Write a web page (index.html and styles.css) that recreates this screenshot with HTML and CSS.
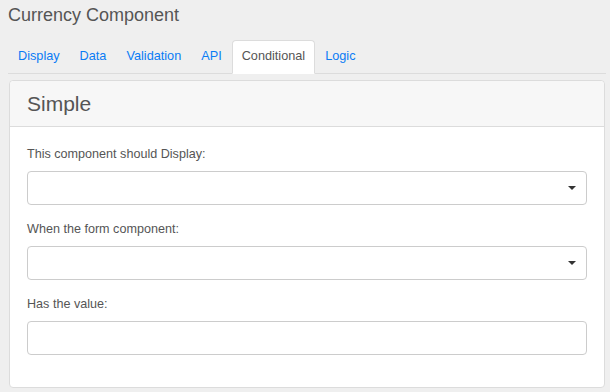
FILE: index.html
```html
<!DOCTYPE html>
<html lang="en">
<head>
<meta charset="UTF-8">
<meta name="viewport" content="width=device-width, initial-scale=1.0">
<title>Currency Component</title>
<link rel="stylesheet" href="styles.css">
</head>
<body>

<div class="page">
  <h1 class="title">Currency Component</h1>

  <!-- Tabs -->
  <ul class="tabs">
    <li><a class="tab" href="#">Display</a></li>
    <li><a class="tab" href="#">Data</a></li>
    <li><a class="tab" href="#">Validation</a></li>
    <li><a class="tab" href="#">API</a></li>
    <li><a class="tab active" href="#">Conditional</a></li>
    <li><a class="tab" href="#">Logic</a></li>
  </ul>

  <!-- Simple conditional -->
  <div class="card">
    <div class="card-head">Simple</div>
    <div class="card-body">
      <div class="group">
        <label>This component should Display:</label>
        <div class="select"><span class="caret"></span></div>
      </div>
      <div class="group">
        <label>When the form component:</label>
        <div class="select"><span class="caret"></span></div>
      </div>
      <div class="group">
        <label>Has the value:</label>
        <input class="input" type="text">
      </div>
    </div>
  </div>
</div>

</body>
</html>
```

FILE: styles.css
```css
*{margin:0;padding:0;box-sizing:border-box}
html,body{background:#efefef;font-family:'Liberation Sans',Arial,sans-serif;color:#555}
.page{margin:0 4px 0 8px}

/* ---------------- Title ---------------- */
.title{font-size:18px;font-weight:400;line-height:21px;padding-top:5px;color:#555}

/* ---------------- Tabs ---------------- */
.tabs{display:flex;list-style:none;margin-top:14px;border-bottom:1px solid #dcdcdc}
.tab{display:block;margin-bottom:-1px;padding:7px 9px 9px;font-size:12.7px;line-height:16px;color:#0a7cf5;text-decoration:none;border:1px solid transparent;border-radius:4px 4px 0 0}
.tab.active{background:#fff;color:#555;border-color:#dcdcdc #dcdcdc #fff}

/* ---------------- Card ---------------- */
.card{margin:6px 1px 0;background:#fff;border:1px solid #dcdcdc;border-radius:4px}
.card-head{height:46px;padding:0 17px;display:flex;align-items:center;background:#f7f7f7;border-bottom:1px solid #dcdcdc;border-radius:4px 4px 0 0;font-size:21px;color:#555}
.card-body{padding:18px 17px 17px}
.group{margin-bottom:15px}
.group label{display:block;font-size:12.6px;line-height:19px;margin-bottom:7px;color:#555}
.select,.input{position:relative;display:block;width:100%;height:34px;background:#fff;border:1px solid #ccc;border-radius:4px;font:inherit}
.caret{position:absolute;right:10px;top:14px;width:0;height:0;border-left:4px solid transparent;border-right:4px solid transparent;border-top:4px solid #333}
```
